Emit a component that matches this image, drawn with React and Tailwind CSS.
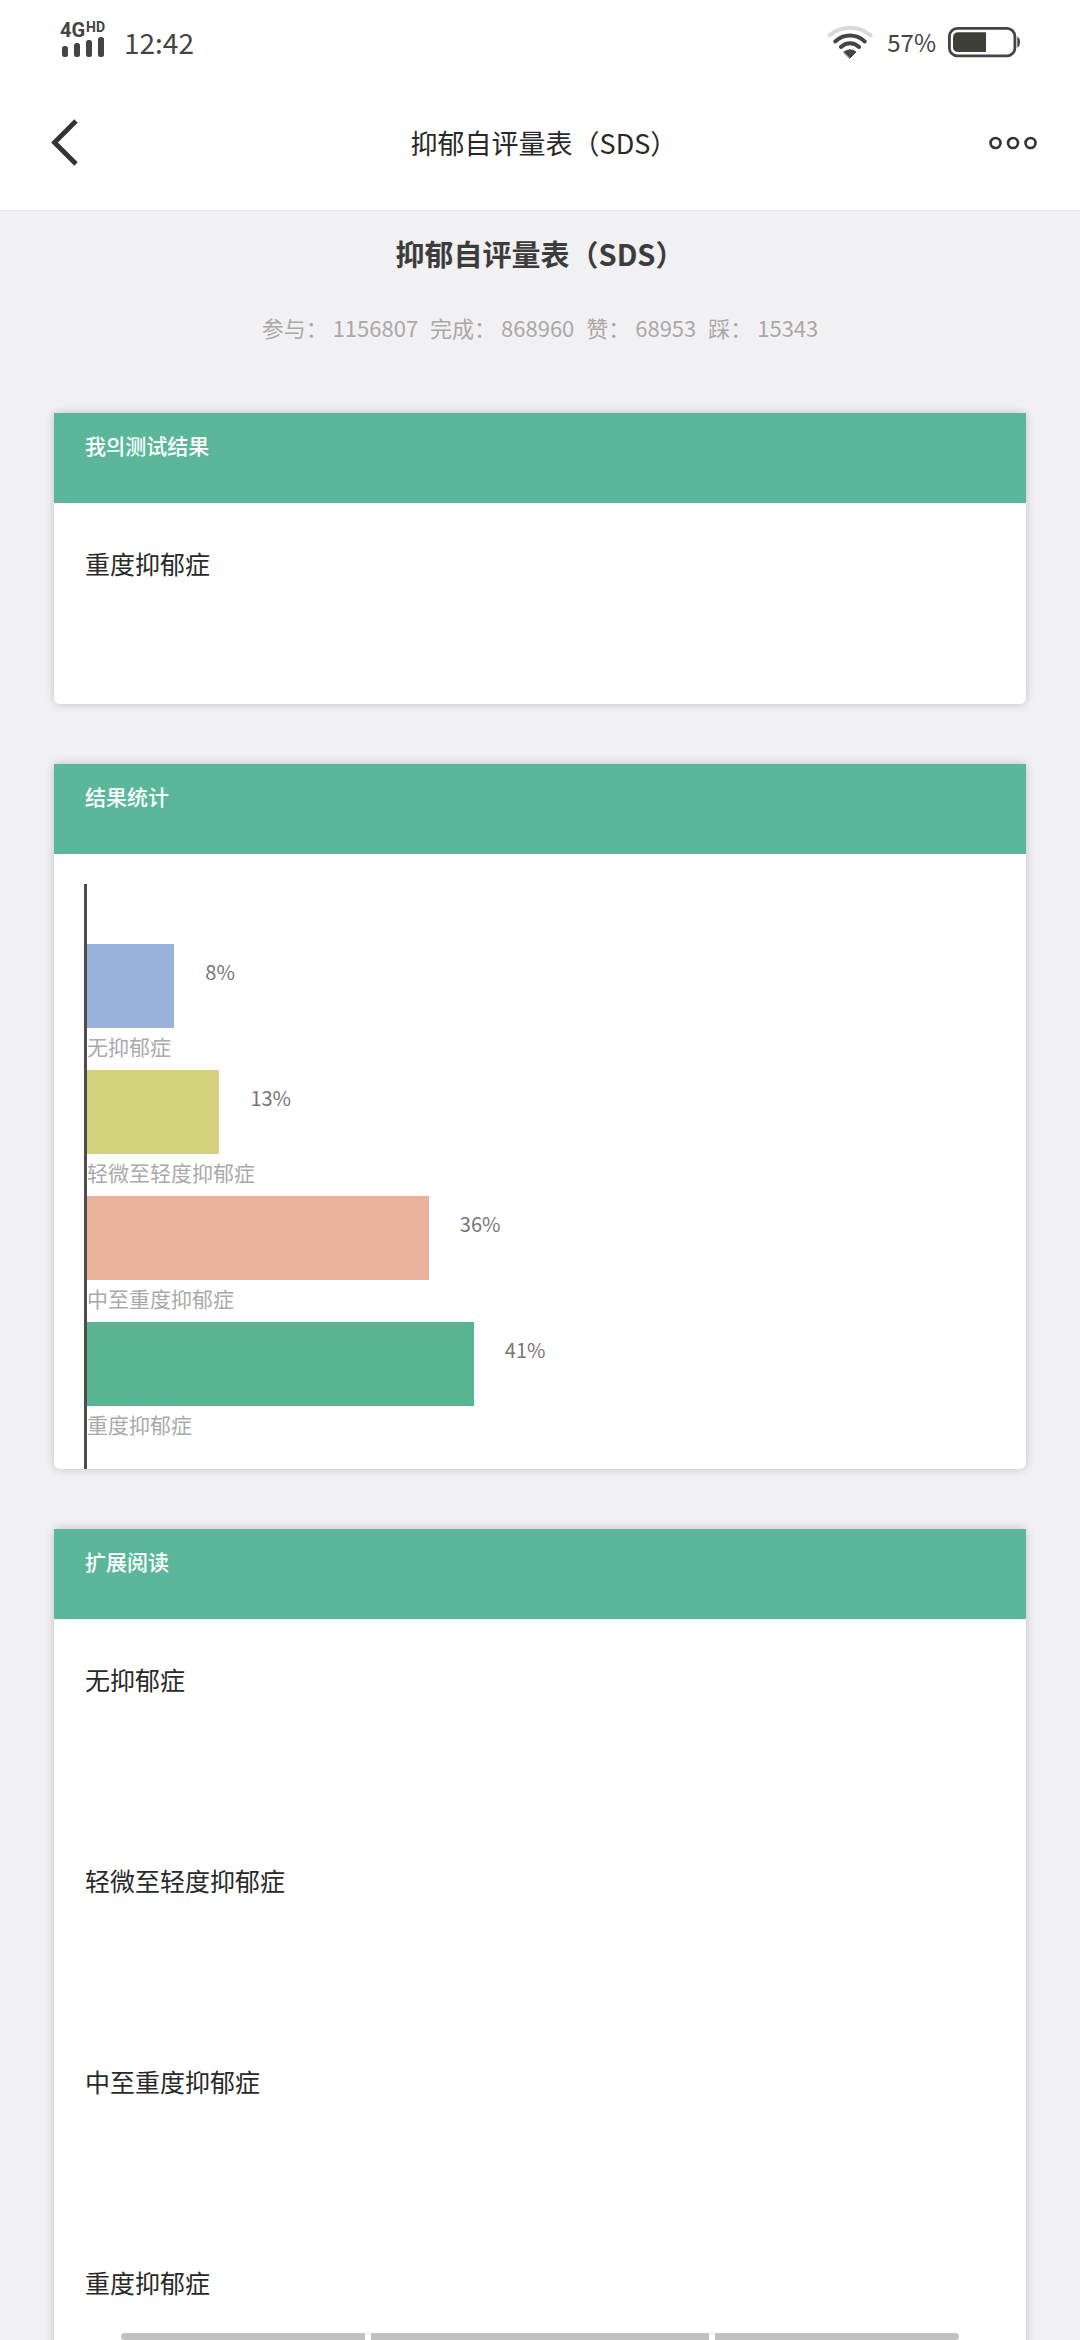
import React from "react";

const results = [
  { label: "无抑郁症", value: "8%", share: 9.3, color: "bg-[#98b2db]" },
  { label: "轻微至轻度抑郁症", value: "13%", share: 14.1, color: "bg-[#d3d37e]" },
  { label: "中至重度抑郁症", value: "36%", share: 36.4, color: "bg-[#eab29a]" },
  { label: "重度抑郁症", value: "41%", share: 41.2, color: "bg-[#59b591]" },
];

function SignalIcon() {
  return (
    <svg width="52" height="56" viewBox="0 -8 52 56" fill="#444444" aria-label="4G HD">
      <text x="0" y="15" fontFamily="Roboto" fontWeight="700" fontSize="20">4G</text>
      <text x="26" y="10" fontFamily="Roboto" fontWeight="700" fontSize="14">HD</text>
      <rect x="2" y="24" width="6" height="11" rx="2.5" />
      <rect x="14" y="21" width="6" height="14" rx="2.5" />
      <rect x="26" y="18" width="6" height="17" rx="2.5" />
      <rect x="38" y="15" width="6" height="20" rx="2.5" />
    </svg>
  );
}

function WifiIcon() {
  return (
    <svg width="46" height="34" viewBox="0 0 46 34" fill="none" stroke="#444444" strokeWidth="4" strokeLinecap="round" aria-hidden="true">
      <path d="M2.5 10.3C14.5 .1 31.500 .1 43.500 10.300" stroke="#dadada" />
      <path d="M8.200 16.500C17 8.600 29 8.600 37.800 16.500" />
      <path d="M13.900 22C19.300 17 26.700 17 32.100 22" />
      <path d="M17 27Q23 22.500 29 27L23 33Z" fill="#444444" strokeWidth="1" strokeLinejoin="round" />
    </svg>
  );
}

function BatteryIcon() {
  return (
    <svg width="73" height="31" viewBox="0 0 73 31" aria-hidden="true">
      <rect x="1.400" y="1.400" width="65.500" height="27.500" rx="8" fill="none" stroke="#444444" strokeWidth="2.800" />
      <path d="M38 5.300V25H10.500Q5 25 5 19.500V10.800Q5 5.300 10.500 5.300Z" fill="#3e3f39" />
      <path d="M69.300 9.500Q72 11 72 15T69.300 20.700Z" fill="#444444" />
    </svg>
  );
}

function Card({ title, children }) {
  return (
    <section className="overflow-hidden rounded-b-md bg-white shadow-[0_0_10px_rgba(0,0,0,0.2)]">
      <h2 className="h-[90px] bg-[#5cb79a] px-[31px] pt-[18px] text-[21px] leading-7 font-medium text-white">{title}</h2>
      {children}
    </section>
  );
}

function Entry({ children }) {
  return <p className="h-[201px] px-[31px] pt-11 text-[25px] leading-8 text-[#292929]">{children}</p>;
}

export default function App() {
  return (
    <div className="flex h-screen flex-col bg-[#f1f1f3] font-['Noto_Sans_CJK_SC',sans-serif]">
      <header className="shrink-0 border-b border-[#e6e6e8] bg-white">
        <div className="flex h-[78px] items-center justify-between pt-1.5 pr-[59px] pl-[60px] text-[#444444]">
          <div className="flex items-center gap-3">
            <SignalIcon />
            <span className="text-[28px] leading-8">12:42</span>
          </div>
          <div className="flex items-center">
            <WifiIcon />
            <span className="mr-3 ml-3.5 text-2xl leading-8">57%</span>
            <BatteryIcon />
          </div>
        </div>
        <nav className="grid h-[132px] grid-cols-[1fr_auto_1fr] items-center pr-[43px] pb-0.5 pl-[51px]">
          <button type="button" aria-label="返回" className="justify-self-start">
            <svg width="28" height="48" viewBox="0 0 28 48" fill="none" stroke="#333333" strokeWidth="4.800" aria-hidden="true">
              <path d="M25 2L3.500 23.500L25 45" />
            </svg>
          </button>
          <p className="text-[27px] leading-9 text-[#292929]">抑郁自评量表（SDS）</p>
          <button type="button" aria-label="更多" className="justify-self-end">
            <svg width="48" height="14" viewBox="0 0 48 14" fill="none" stroke="#333333" strokeWidth="2.600" aria-hidden="true">
              <circle cx="6.500" cy="7" r="5" />
              <circle cx="24" cy="7" r="5" />
              <circle cx="41.500" cy="7" r="5" />
            </svg>
          </button>
        </nav>
      </header>

      <main className="min-h-0 flex-1 overflow-y-auto px-[54px] [scrollbar-width:none]">
        <h1 className="pt-6 text-center text-[29px] leading-9 font-bold text-[#3c3c3c]">抑郁自评量表（SDS）</h1>
        <p className="mt-10 mb-[70px] flex justify-center gap-3 text-[22px] leading-8 text-[#aca7a7]">
          <span>参与： 1156807</span>
          <span>完成： 868960</span>
          <span>赞： 68953</span>
          <span>踩： 15343</span>
        </p>

        <div className="flex flex-col gap-[60px]">
          <Card title="我의测试结果">
            <Entry>重度抑郁症</Entry>
          </Card>

          <Card title="结果统计">
            <div className="mt-[30px] ml-[30px] border-l-[3px] border-[#4d4d4d] pt-[60px] pb-[21px]">
              {results.map((item) => (
                <div key={item.label}>
                  <div className="flex h-[84px]">
                    <div className={item.color} style={{ width: item.share + "%" }} />
                    <span className="pt-3.5 pl-[31px] text-xl leading-7 text-[#777777]">{item.value}</span>
                  </div>
                  <p className="h-[42px] pt-0.5 text-[21px] leading-8 text-[#aaaaaa]">{item.label}</p>
                </div>
              ))}
            </div>
          </Card>

          <Card title="扩展阅读">
            {results.map((item) => (
              <Entry key={item.label}>{item.label}</Entry>
            ))}
          </Card>
        </div>
      </main>

      <div className="fixed inset-x-0 bottom-0 flex h-[7px] gap-1.5 px-[121px]" aria-hidden="true">
        <div className="flex-[244] rounded-l-sm bg-[#c1c1c1]" />
        <div className="flex-[338] bg-[#c1c1c1]" />
        <div className="flex-[244] rounded-r-sm bg-[#c1c1c1]" />
      </div>
    </div>
  );
}
